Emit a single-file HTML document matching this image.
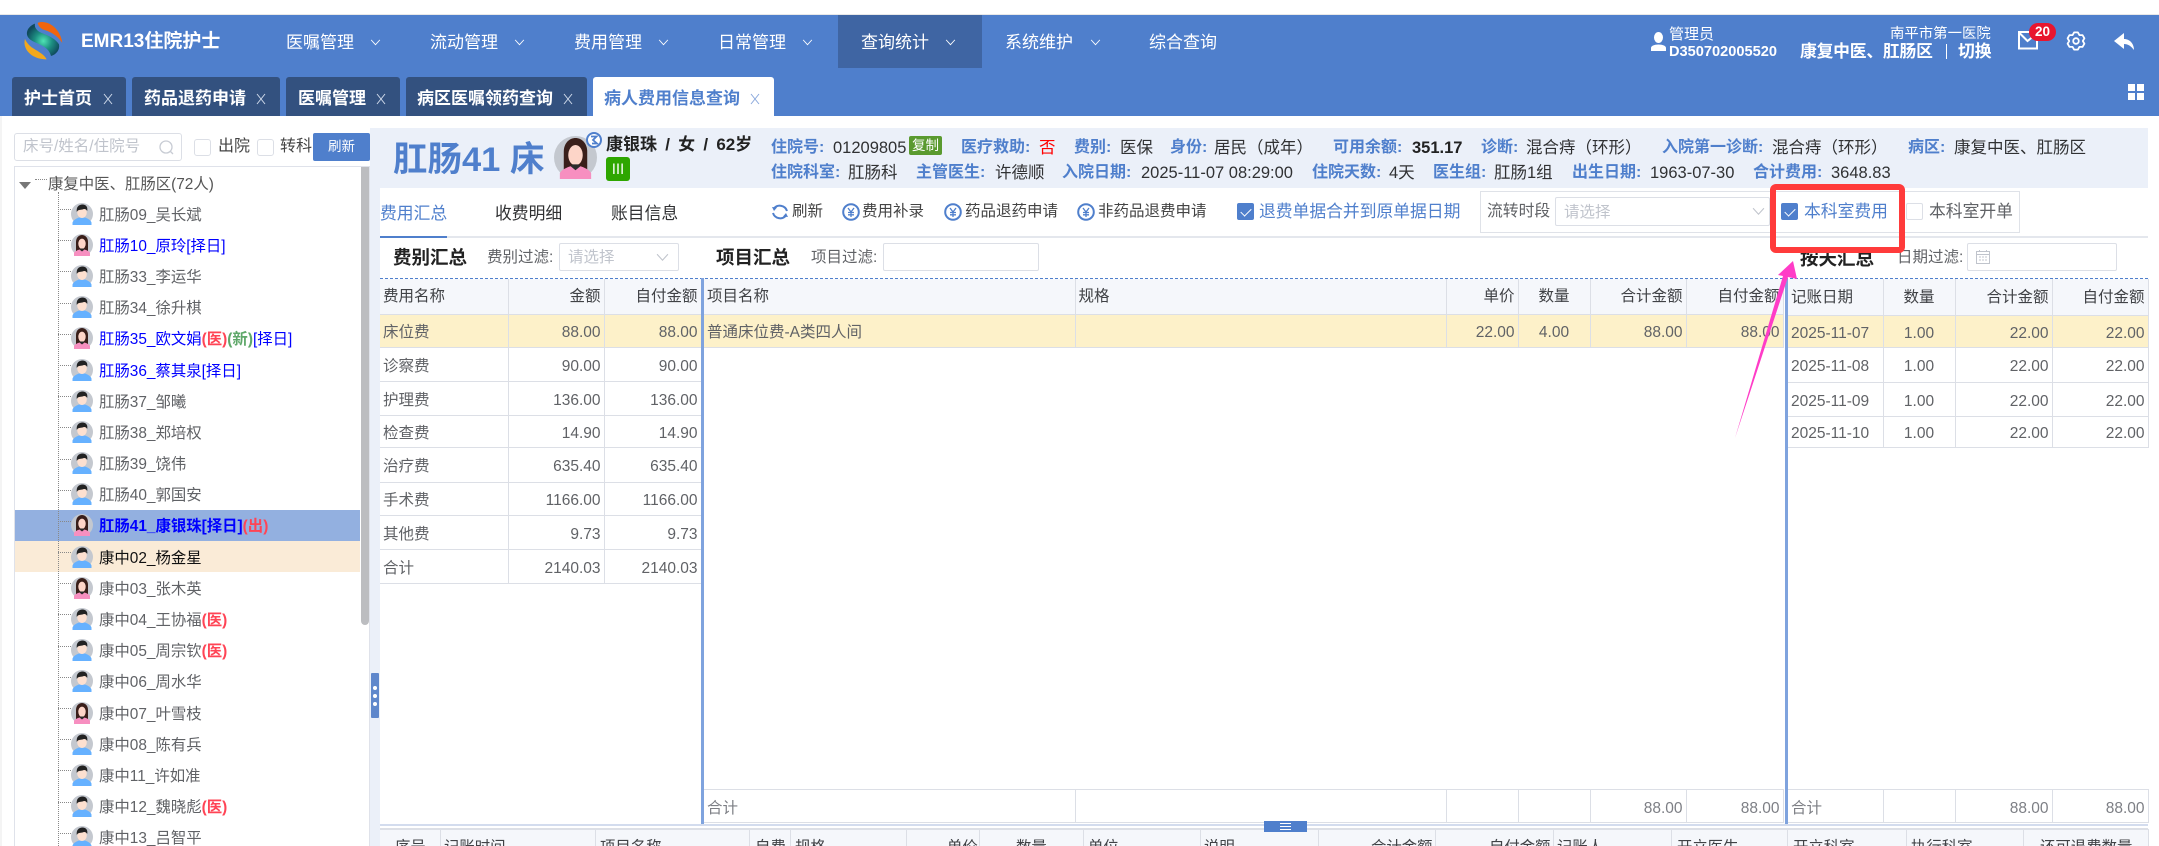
<!DOCTYPE html>
<html lang="zh"><head><meta charset="utf-8"><title>EMR13住院护士</title>
<style>
html,body{margin:0;padding:0;background:#fff}
#p{position:relative;width:2159px;height:846px;overflow:hidden;background:#fff;font-family:"Liberation Sans","Noto Sans CJK SC",sans-serif;font-size:15.5px;color:#606266}
#p *{box-sizing:border-box}
.a{position:absolute}
.t{position:absolute;white-space:nowrap;line-height:20px;height:20px}
.n{color:#fff;font-size:17px;top:33px}
.tab{position:absolute;top:77px;height:39px;background:#33517f;border-radius:3px 3px 0 0}
.tt{position:absolute;top:89px;color:#fff;font-weight:700;font-size:17px;line-height:20px;white-space:nowrap}
.l{color:#4f7fcc;font-weight:700;font-size:16px}
.v{color:#303133;font-size:16.5px}
.r1{top:138px}.r2{top:162.500px}
.cb{position:absolute;width:17px;height:17px;border:1px solid #dcdfe6;border-radius:2px;background:#fff}
.cb.on{background:#4f7fcc;border-color:#4f7fcc}
.cb.on:after{content:"";position:absolute;left:5px;top:2px;width:5px;height:9px;border:solid #fff;border-width:0 1px 1px 0;transform:rotate(45deg)}
.inp{position:absolute;background:#fff;border:1px solid #dcdfe6;border-radius:2px}
.ph{color:#c0c4cc;font-size:15.5px}
.row{position:relative;height:31.2px;display:flex;align-items:center;padding-left:56px;color:#606266;font-size:15.4px;white-space:nowrap}
.row:before{content:"";position:absolute;left:43px;width:13px;top:11px;border-top:1px dotted #888}
.row svg{width:22px;height:22px;margin-right:6px;flex:none}
.b{color:#00f}.m{color:#ff4455;font-weight:700}.g{color:#5fa86a;font-weight:700}
table{position:absolute;border-collapse:collapse;table-layout:fixed;font-size:15.5px;color:#606266}
td,th{border-right:1px solid #dcdfe6;border-bottom:1px solid #dcdfe6;padding:0 3px;font-weight:400;overflow:hidden;white-space:nowrap;text-align:left;line-height:20px}
td{padding-top:5px}
th{background:#f5f7fb;color:#404246;padding-top:2px}
.R{text-align:right}.C{text-align:center}
tr.hl td{background:#fdf1c9}
.bt{position:absolute;top:838px;line-height:20px;white-space:nowrap;color:#404246;font-size:15.4px}
.vl{position:absolute;top:829px;height:17px;width:1px;background:#dcdfe6}
</style></head><body><div id="p">

<svg width="0" height="0" style="position:absolute"><defs>
<symbol id="ma" viewBox="0 0 22 22"><circle cx="11" cy="11" r="11" fill="#c4c8cf"/><path d="M1.5 22v-2.5c1-3 5-4.5 6.5-5h6c1.5.5 5.500 2 6.500 5V22z" fill="#66b1ff"/><ellipse cx="11" cy="9.500" rx="4.800" ry="5.500" fill="#fde0d0"/><path d="M5.800 9C5 4 8 1.500 11.500 1.500 15 1.500 17 4 16.200 8 15 6 13.500 5.500 11.500 6.500 9 7 7 6.500 5.800 9z" fill="#222"/></symbol>
<symbol id="fe" viewBox="0 0 22 22"><circle cx="11" cy="11" r="11" fill="#c4c8cf"/><path d="M5 20V8c0-4.500 3-7 6-7s6 2.500 6 7v12z" fill="#3a1f1a"/><path d="M3 22v-3c1-2 4-3 5.500-3.500h5c1.500.5 4.500 1.500 5.500 3.500v3z" fill="#f78fc0"/><ellipse cx="11" cy="9.800" rx="3.700" ry="5.200" fill="#fdd5c8"/><path d="M8.500 15.500l2.500 2 2.500-2-1-1h-3z" fill="#2b2b2b"/></symbol>
<symbol id="yen" viewBox="0 0 18 18"><circle cx="9" cy="9" r="7.800" fill="none" stroke="#4f7fcc" stroke-width="2"/><path d="M6 5l3 4 3-4M9 9v5M6 9.500h6M6 11.800h6" fill="none" stroke="#4f7fcc" stroke-width="1.300"/></symbol>
<symbol id="x" viewBox="0 0 10 12"><path d="M1 1l8 10M9 1L1 11" stroke="currentColor" stroke-width="1" fill="none"/></symbol>
<symbol id="ch" viewBox="0 0 12 8"><path d="M1 1l5 5.500L11 1" stroke="currentColor" stroke-width="1" fill="none"/></symbol>
<radialGradient id="lg" gradientUnits="userSpaceOnUse" cx="85" cy="80" r="52"><stop offset="0" stop-color="#4fe3b4"/><stop offset=".5" stop-color="#1d8f82"/><stop offset="1" stop-color="#0f4a5c"/></radialGradient>
</defs></svg>

<!-- header -->
<div class="a" style="left:0;top:14px;width:2159px;height:1px;background:#e8e8e8"></div>
<div class="a" style="left:0;top:15px;width:2159px;height:101px;background:#4f7fcc"></div>
<div class="a" style="left:838px;top:15px;width:144px;height:53px;background:#3f65a3"></div>
<svg class="a" style="left:23px;top:21px" width="41" height="41" viewBox="24 20 123 123">
<path d="M68 26C90 15 135 35 142 86 125 60 100 50 85 46 76 42 70 34 68 26z" fill="#f0650e"/>
<path d="M60 28C35 38 30 60 42 72 55 88 100 90 108 125 125 120 135 105 132 90 115 65 85 60 72 52 62 45 58 36 60 28z" fill="url(#lg)"/>
<path d="M30 74C22 100 45 135 95 135 90 125 80 118 68 110 50 100 38 92 30 74z" fill="#f2a81d"/>
</svg>
<div class="t" style="left:81px;top:32px;color:#fff;font-weight:700;font-size:19px">EMR13住院护士</div>
<div class="t n" style="left:286px">医嘱管理</div>
<div class="t n" style="left:430px">流动管理</div>
<div class="t n" style="left:574px">费用管理</div>
<div class="t n" style="left:718px">日常管理</div>
<div class="t n" style="left:861px">查询统计</div>
<div class="t n" style="left:1005px">系统维护</div>
<div class="t n" style="left:1149px">综合查询</div>
<svg class="a" style="left:370px;top:39px;color:#fff" width="11" height="7"><use href="#ch"/></svg>
<svg class="a" style="left:514px;top:39px;color:#fff" width="11" height="7"><use href="#ch"/></svg>
<svg class="a" style="left:658px;top:39px;color:#fff" width="11" height="7"><use href="#ch"/></svg>
<svg class="a" style="left:802px;top:39px;color:#fff" width="11" height="7"><use href="#ch"/></svg>
<svg class="a" style="left:945px;top:39px;color:#fff" width="11" height="7"><use href="#ch"/></svg>
<svg class="a" style="left:1090px;top:39px;color:#fff" width="11" height="7"><use href="#ch"/></svg>

<svg class="a" style="left:1651px;top:32px" width="15" height="19" viewBox="0 0 15 19"><ellipse cx="7.500" cy="5.500" rx="4.500" ry="5.500" fill="#fff"/><path d="M0 19v-3c0-2 3-3.500 7.500-3.500S15 14 15 16v3z" fill="#fff"/></svg>
<div class="t" style="left:1669px;top:27px;color:#fff;font-size:15px;line-height:16px">管理员</div>
<div class="t" style="left:1669px;top:41.500px;color:#fff;font-size:14.600px;font-weight:700">D350702005520</div>
<div class="t" style="left:1890px;top:24px;color:#fff;font-size:14.400px">南平市第一医院</div>
<div class="t" style="left:1800px;top:42px;color:#fff;font-size:16.800px;font-weight:700;letter-spacing:-.2px">康复中医、肛肠区</div>
<div class="a" style="left:1946px;top:44px;width:1px;height:15px;background:#fff"></div>
<div class="t" style="left:1958px;top:42px;color:#fff;font-size:16.800px;font-weight:700">切换</div>
<svg class="a" style="left:2017px;top:30px" width="22" height="20" viewBox="0 0 22 20"><path d="M14 2H2v16.500h18V8M2.500 3l8 8 5-4" fill="none" stroke="#fff" stroke-width="2"/></svg>
<div class="a" style="left:2029px;top:23px;width:27px;height:18px;border-radius:9px;background:#e8152e;color:#fff;font-size:13.500px;font-weight:700;text-align:center;line-height:18px">20</div>
<svg class="a" style="left:2066px;top:31px" width="20" height="20" viewBox="0 0 20 20"><path d="M8.100 1.400h3.800l1.500 2.700h3.100l1.900 3.200-1.600 2.700 1.600 2.700-1.900 3.200h-3.100l-1.500 2.700H8.100l-1.500-2.700H3.500l-1.900-3.200L3.200 10 1.600 7.300l1.900-3.200h3.100z" fill="none" stroke="#fff" stroke-width="1.800" stroke-linejoin="round"/><circle cx="10" cy="10" r="2.800" fill="none" stroke="#fff" stroke-width="1.800"/></svg>
<svg class="a" style="left:2114px;top:33px" width="20" height="17" viewBox="0 0 20 17"><path d="M0 8L10 0v6c6 0 10 5 10 11-3-4-6-6-10-6v5z" fill="#fff"/></svg>
<svg class="a" style="left:2128px;top:84px" width="16" height="16"><rect width="7" height="7" fill="#fff"/><rect x="9" width="7" height="7" fill="#fff"/><rect y="9" width="7" height="7" fill="#fff"/><rect x="9" y="9" width="7" height="7" fill="#fff"/></svg>

<!-- tabs -->
<div class="tab" style="left:12px;width:114px"></div><div class="tt" style="left:24px">护士首页</div>
<div class="tab" style="left:132px;width:148px"></div><div class="tt" style="left:144px">药品退药申请</div>
<div class="tab" style="left:286px;width:114px"></div><div class="tt" style="left:298px">医嘱管理</div>
<div class="tab" style="left:406px;width:181px"></div><div class="tt" style="left:417px">病区医嘱领药查询</div>
<div class="tab" style="left:593px;width:181px;background:#fff"></div><div class="tt" style="left:604px;color:#4f7fcc">病人费用信息查询</div>
<svg class="a" style="left:103px;top:93px;color:#cfd9ea" width="10" height="12"><use href="#x"/></svg>
<svg class="a" style="left:256px;top:93px;color:#cfd9ea" width="10" height="12"><use href="#x"/></svg>
<svg class="a" style="left:376px;top:93px;color:#cfd9ea" width="10" height="12"><use href="#x"/></svg>
<svg class="a" style="left:563px;top:93px;color:#cfd9ea" width="10" height="12"><use href="#x"/></svg>
<svg class="a" style="left:750px;top:93px;color:#8aa8dc" width="10" height="12"><use href="#x"/></svg>

<!-- left panel -->
<div class="a" style="left:0;top:116px;width:2px;height:730px;background:#f4f4f4"></div>
<div class="inp" style="left:14px;top:133px;width:168px;height:28px;border-radius:3px"></div>
<div class="t ph" style="left:23px;top:137px">床号/姓名/住院号</div>
<svg class="a" style="left:159px;top:140px" width="15" height="15"><circle cx="7" cy="7" r="6" fill="none" stroke="#c8ccd4" stroke-width="1.300"/><path d="M11 11l3 3" stroke="#c8ccd4" stroke-width="1.300"/></svg>
<div class="cb" style="left:194px;top:139px;border-radius:3px"></div>
<div class="t" style="left:218px;top:137px;font-size:16px;color:#444">出院</div>
<div class="cb" style="left:257px;top:139px;border-radius:3px"></div>
<div class="t" style="left:280px;top:137px;font-size:16px;color:#444">转科</div>
<div class="a" style="left:313px;top:133px;width:57px;height:28px;background:#4f7fcc;border-radius:2px;color:#fff;font-size:13.500px;line-height:28px;text-align:center">刷新</div>

<div class="a" style="left:14px;top:166px;width:356px;height:680px;border:1px solid #dfe2ea;border-bottom:0;overflow:hidden">
  <div class="a" style="left:0;top:31px;width:345px">
    <div class="row"><svg><use href="#ma"/></svg>肛肠09_吴长斌</div>
    <div class="row b" style="color:#00f"><svg><use href="#fe"/></svg>肛肠10_原玲[择日]</div>
    <div class="row"><svg><use href="#ma"/></svg>肛肠33_李运华</div>
    <div class="row"><svg><use href="#ma"/></svg>肛肠34_徐升棋</div>
    <div class="row" style="color:#00f"><svg><use href="#fe"/></svg>肛肠35_欧文娟<span class="m">(医)</span><span class="g">(新)</span>[择日]</div>
    <div class="row" style="color:#00f"><svg><use href="#ma"/></svg>肛肠36_蔡其泉[择日]</div>
    <div class="row"><svg><use href="#ma"/></svg>肛肠37_邹曦</div>
    <div class="row"><svg><use href="#ma"/></svg>肛肠38_郑培权</div>
    <div class="row"><svg><use href="#ma"/></svg>肛肠39_饶伟</div>
    <div class="row"><svg><use href="#ma"/></svg>肛肠40_郭国安</div>
    <div class="row" style="background:#93b0e0;color:#00f;font-weight:700"><svg><use href="#fe"/></svg>肛肠41_康银珠[择日]<span class="m">(出)</span></div>
    <div class="row" style="background:#faebd7;color:#111"><svg><use href="#ma"/></svg>康中02_杨金星</div>
    <div class="row"><svg><use href="#fe"/></svg>康中03_张木英</div>
    <div class="row"><svg><use href="#ma"/></svg>康中04_王协福<span class="m">(医)</span></div>
    <div class="row"><svg><use href="#ma"/></svg>康中05_周宗钦<span class="m">(医)</span></div>
    <div class="row"><svg><use href="#ma"/></svg>康中06_周水华</div>
    <div class="row"><svg><use href="#fe"/></svg>康中07_叶雪枝</div>
    <div class="row"><svg><use href="#ma"/></svg>康中08_陈有兵</div>
    <div class="row"><svg><use href="#ma"/></svg>康中11_许如准</div>
    <div class="row"><svg><use href="#ma"/></svg>康中12_魏晓彪<span class="m">(医)</span></div>
    <div class="row"><svg><use href="#ma"/></svg>康中13_吕智平</div>
  </div>
  <div class="a" style="left:43px;top:25px;height:660px;border-left:1px dotted #888"></div>
  <div class="a" style="left:20px;top:12px;width:12px;border-top:1px dotted #888"></div>
  <div class="a" style="left:4px;top:15px;width:0;height:0;border-left:6px solid transparent;border-right:6px solid transparent;border-top:7px solid #777"></div>
  <div class="t" style="left:33px;top:8px;font-size:15.400px;color:#555">康复中医、肛肠区(72人)</div>
  <div class="a" style="left:346px;top:0;width:8px;height:458px;background:#bcbdc0;border-radius:0 0 4px 4px"></div>
</div>
<div class="a" style="left:370px;top:128px;width:10px;height:718px;background:#ebf0f9"></div>
<div class="a" style="left:371px;top:673px;width:8px;height:45px;background:#5e87cc;border-radius:1px"></div>
<div class="a" style="left:373px;top:686px;width:4px;height:4px;border-radius:2px;background:#fff"></div>
<div class="a" style="left:373px;top:694px;width:4px;height:4px;border-radius:2px;background:#fff"></div>
<div class="a" style="left:373px;top:702px;width:4px;height:4px;border-radius:2px;background:#fff"></div>

<!-- patient info -->
<div class="a" style="left:379px;top:128px;width:1769px;height:60px;background:#ebf0f9"></div>
<div class="t" style="left:393px;top:142px;height:36px;line-height:36px;font-size:34.500px;font-weight:700;color:#4f7fcc">肛肠41 床</div>
<svg class="a" style="left:554px;top:136px" width="43" height="43"><use href="#fe"/></svg>
<svg class="a" style="left:586px;top:132px" width="16" height="16" viewBox="0 0 16 16"><circle cx="8" cy="8" r="7" fill="#fff" stroke="#4f7fcc" stroke-width="2"/><path d="M5 4.500h5.500L7 8l4 3.500H6" fill="none" stroke="#4f7fcc" stroke-width="1.800"/></svg>
<div class="t" style="left:606px;top:135px;font-size:17px;font-weight:700;color:#222;word-spacing:3.500px">康银珠 / 女 / 62岁</div>
<div class="a" style="left:606px;top:157px;width:24px;height:24px;background:#2ea600;border-radius:3px;color:#fff;font-size:14px;text-align:center;line-height:24px">Ⅲ</div>

<div class="t l r1" style="left:771px">住院号:</div><div class="t v r1" style="left:833px">01209805</div>
<div class="a" style="left:909px;top:136px;width:33px;height:19px;background:#5a9a2f;border-radius:2px;color:#fff;font-size:13.500px;line-height:19px;text-align:center">复制</div>
<div class="t l r1" style="left:961px">医疗救助:</div><div class="t v r1" style="left:1039px;color:#f00">否</div>
<div class="t l r1" style="left:1074px">费别:</div><div class="t v r1" style="left:1120px">医保</div>
<div class="t l r1" style="left:1170px">身份:</div><div class="t v r1" style="left:1214px">居民（成年）</div>
<div class="t l r1" style="left:1333px">可用余额:</div><div class="t v r1" style="left:1412px;font-weight:700;color:#222">351.17</div>
<div class="t l r1" style="left:1481px">诊断:</div><div class="t v r1" style="left:1526px">混合痔（环形）</div>
<div class="t l r1" style="left:1662px">入院第一诊断:</div><div class="t v r1" style="left:1772px">混合痔（环形）</div>
<div class="t l r1" style="left:1908px">病区:</div><div class="t v r1" style="left:1954px">康复中医、肛肠区</div>

<div class="t l r2" style="left:771px">住院科室:</div><div class="t v r2" style="left:848px">肛肠科</div>
<div class="t l r2" style="left:916px">主管医生:</div><div class="t v r2" style="left:995px">许德顺</div>
<div class="t l r2" style="left:1062px">入院日期:</div><div class="t v r2" style="left:1141px">2025-11-07 08:29:00</div>
<div class="t l r2" style="left:1312px">住院天数:</div><div class="t v r2" style="left:1389px">4天</div>
<div class="t l r2" style="left:1433px">医生组:</div><div class="t v r2" style="left:1494px">肛肠1组</div>
<div class="t l r2" style="left:1572px">出生日期:</div><div class="t v r2" style="left:1650px">1963-07-30</div>
<div class="t l r2" style="left:1753px">合计费用:</div><div class="t v r2" style="left:1831px">3648.83</div>

<!-- tabs row -->
<div class="a" style="left:380px;top:236px;width:1768px;height:2px;background:#e4e7ed"></div>
<div class="a" style="left:380px;top:236px;width:67px;height:2px;background:#4f7fcc"></div>
<div class="t" style="left:380px;top:204px;font-size:16.800px;color:#4f7fcc">费用汇总</div>
<div class="t" style="left:495px;top:204px;font-size:16.800px;color:#303133">收费明细</div>
<div class="t" style="left:611px;top:204px;font-size:16.800px;color:#303133">账目信息</div>

<svg class="a" style="left:771px;top:203px" width="18" height="18" viewBox="0 0 18 18"><path d="M3 5.500A7.500 7.500 0 0 1 16 8M15 12.500A7.500 7.500 0 0 1 2 10" fill="none" stroke="#4f7fcc" stroke-width="2"/><path d="M1 4l5 .5L3 8zM17 14l-5-.5L15 10z" fill="#4f7fcc"/></svg>
<div class="t" style="left:792px;top:202px;color:#444;font-size:15.500px">刷新</div>
<svg class="a" style="left:842px;top:203px" width="18" height="18"><use href="#yen"/></svg>
<div class="t" style="left:862px;top:202px;color:#444;font-size:15.500px">费用补录</div>
<svg class="a" style="left:944px;top:203px" width="18" height="18"><use href="#yen"/></svg>
<div class="t" style="left:965px;top:202px;color:#444;font-size:15.500px">药品退药申请</div>
<svg class="a" style="left:1077px;top:203px" width="18" height="18"><use href="#yen"/></svg>
<div class="t" style="left:1098px;top:202px;color:#444;font-size:15.500px">非药品退费申请</div>
<div class="cb on" style="left:1237px;top:203px"></div>
<div class="t" style="left:1259px;top:202px;color:#4f7fcc;font-size:16.800px">退费单据合并到原单据日期</div>

<div class="a" style="left:1480px;top:191px;width:540px;height:42px;border:1px solid #dfe2e8"></div>
<div class="t" style="left:1487px;top:202px;color:#606266;font-size:15.800px">流转时段</div>
<div class="inp" style="left:1555px;top:197px;width:215px;height:29px"></div>
<div class="t ph" style="left:1564px;top:203px">请选择</div>
<svg class="a" style="left:1752px;top:207px;color:#c0c4cc" width="13" height="9"><use href="#ch"/></svg>
<div class="cb on" style="left:1781px;top:203px"></div>
<div class="t" style="left:1804px;top:202px;color:#4f7fcc;font-size:16.800px">本科室费用</div>
<div class="cb" style="left:1906px;top:203px"></div>
<div class="t" style="left:1929px;top:202px;color:#606266;font-size:16.800px">本科室开单</div>

<!-- section row -->
<div class="t" style="left:393px;top:248px;font-size:18.500px;font-weight:700;color:#222">费别汇总</div>
<div class="t" style="left:487px;top:248px;font-size:15.500px;color:#606266;line-height:20px">费别过滤:</div>
<div class="inp" style="left:559px;top:243px;width:120px;height:28px"></div>
<div class="t ph" style="left:568px;top:248px">请选择</div>
<svg class="a" style="left:656px;top:253px;color:#c0c4cc" width="13" height="9"><use href="#ch"/></svg>
<div class="t" style="left:716px;top:248px;font-size:18.500px;font-weight:700;color:#222">项目汇总</div>
<div class="t" style="left:811px;top:248px;font-size:15.500px;color:#606266">项目过滤:</div>
<div class="inp" style="left:883px;top:243px;width:156px;height:28px"></div>
<div class="t" style="left:1800px;top:249px;font-size:18.500px;font-weight:700;color:#222">按天汇总</div>
<div class="t" style="left:1897px;top:248px;font-size:15.500px;color:#606266">日期过滤:</div>
<div class="inp" style="left:1967px;top:243px;width:150px;height:28px"></div>
<svg class="a" style="left:1976px;top:250px" width="14" height="14" viewBox="0 0 14 14"><rect x=".5" y="1.500" width="13" height="12" fill="none" stroke="#c0c4cc"/><path d="M.5 4.500h13M3 7h2M6 7h2M9 7h2M3 10h2M6 10h2M9 10h2M3.500 0v2M10.500 0v2" stroke="#c0c4cc" fill="none"/></svg>
<div class="a" style="left:380px;top:278px;width:1768px;border-top:1px dashed #4f7fcc"></div>

<!-- left table -->
<table style="left:380px;top:279px;width:321px"><colgroup><col style="width:128px"><col style="width:96px"><col style="width:97px"></colgroup>
<tr style="height:35px"><th>费用名称</th><th class="R">金额</th><th class="R">自付金额</th></tr>
<tr class="hl" style="height:33px"><td>床位费</td><td class="R">88.00</td><td class="R">88.00</td></tr>
<tr style="height:34px"><td>诊察费</td><td class="R">90.00</td><td class="R">90.00</td></tr>
<tr style="height:34px"><td>护理费</td><td class="R">136.00</td><td class="R">136.00</td></tr>
<tr style="height:32px"><td>检查费</td><td class="R">14.90</td><td class="R">14.90</td></tr>
<tr style="height:35px"><td>治疗费</td><td class="R">635.40</td><td class="R">635.40</td></tr>
<tr style="height:33px"><td>手术费</td><td class="R">1166.00</td><td class="R">1166.00</td></tr>
<tr style="height:34px"><td>其他费</td><td class="R">9.73</td><td class="R">9.73</td></tr>
<tr style="height:34px"><td>合计</td><td class="R">2140.03</td><td class="R">2140.03</td></tr>
</table>
<div class="a" style="left:701px;top:278px;width:3px;height:546px;background:#7fa3de"></div>

<!-- middle table -->
<table style="left:704px;top:279px;width:1079px"><colgroup><col style="width:371px"><col style="width:371px"><col style="width:72px"><col style="width:72px"><col style="width:96px"><col style="width:97px"></colgroup>
<tr style="height:35px"><th>项目名称</th><th>规格</th><th class="R">单价</th><th class="C">数量</th><th class="R">合计金额</th><th class="R">自付金额</th></tr>
<tr class="hl" style="height:33px"><td>普通床位费-A类四人间</td><td></td><td class="R">22.00</td><td class="C">4.00</td><td class="R">88.00</td><td class="R">88.00</td></tr>
</table>
<table style="left:704px;top:789px;width:1079px;border-top:1px solid #dcdfe6;color:#7d7f85"><colgroup><col style="width:371px"><col style="width:371px"><col style="width:72px"><col style="width:72px"><col style="width:96px"><col style="width:97px"></colgroup>
<tr style="height:33px"><td>合计</td><td></td><td></td><td></td><td class="R">88.00</td><td class="R">88.00</td></tr>
</table>
<div class="a" style="left:1785px;top:278px;width:3px;height:546px;background:#7fa3de"></div>

<!-- right table -->
<table style="left:1788px;top:279px;width:360px"><colgroup><col style="width:95px"><col style="width:72px"><col style="width:97px"><col style="width:96px"></colgroup>
<tr style="height:36px"><th>记账日期</th><th class="C">数量</th><th class="R">合计金额</th><th class="R">自付金额</th></tr>
<tr class="hl" style="height:32px"><td>2025-11-07</td><td class="C">1.00</td><td class="R">22.00</td><td class="R">22.00</td></tr>
<tr style="height:35px"><td>2025-11-08</td><td class="C">1.00</td><td class="R">22.00</td><td class="R">22.00</td></tr>
<tr style="height:34px"><td>2025-11-09</td><td class="C">1.00</td><td class="R">22.00</td><td class="R">22.00</td></tr>
<tr style="height:31px"><td>2025-11-10</td><td class="C">1.00</td><td class="R">22.00</td><td class="R">22.00</td></tr>
</table>
<table style="left:1788px;top:789px;width:360px;border-top:1px solid #dcdfe6;color:#7d7f85"><colgroup><col style="width:95px"><col style="width:72px"><col style="width:97px"><col style="width:96px"></colgroup>
<tr style="height:33px"><td>合计</td><td></td><td class="R">88.00</td><td class="R">88.00</td></tr>
</table>

<!-- bottom table -->
<div class="a" style="left:380px;top:824px;width:1768px;height:2px;background:#d3dcee"></div>
<div class="a" style="left:380px;top:828px;width:1768px;height:18px;background:#f5f7fb;border-top:2px solid #dcdfe6"></div>
<i class="vl" style="left:440px"></i><i class="vl" style="left:595px"></i><i class="vl" style="left:749px"></i><i class="vl" style="left:790px"></i><i class="vl" style="left:906px"></i><i class="vl" style="left:979px"></i><i class="vl" style="left:1083px"></i><i class="vl" style="left:1200px"></i><i class="vl" style="left:1318px"></i><i class="vl" style="left:1435px"></i><i class="vl" style="left:1553px"></i><i class="vl" style="left:1671px"></i><i class="vl" style="left:1787px"></i><i class="vl" style="left:1906px"></i><i class="vl" style="left:2023px"></i><i class="vl" style="left:2148px"></i>
<div class="bt" style="left:395px">序号</div><div class="bt" style="left:444px">记账时间</div><div class="bt" style="left:600px">项目名称</div><div class="bt" style="left:755px">自费</div><div class="bt" style="left:795px">规格</div><div class="bt" style="left:947px">单价</div><div class="bt" style="left:1016px">数量</div><div class="bt" style="left:1088px">单位</div><div class="bt" style="left:1204px">说明</div><div class="bt" style="left:1371px">合计金额</div><div class="bt" style="left:1489px">自付金额</div><div class="bt" style="left:1557px">记账人</div><div class="bt" style="left:1677px">开立医生</div><div class="bt" style="left:1793px">开立科室</div><div class="bt" style="left:1911px">执行科室</div><div class="bt" style="left:2040px">还可退费数量</div>
<div class="a" style="left:1264px;top:821px;width:43px;height:11px;background:#4f7fcc"></div>
<div class="a" style="left:1280px;top:823px;width:11px;height:7px;border-top:1px solid #fff;border-bottom:1px solid #fff"><div style="margin-top:2px;height:1px;background:#fff"></div></div>

<!-- annotation -->
<div class="a" style="left:1770px;top:184px;width:135px;height:69px;border:6px solid #ff3b3b;border-radius:6px"></div>
<svg class="a" style="left:1730px;top:255px" width="75" height="190" viewBox="1730 255 75 190"><path d="M1735 438L1783 276 1778 275 1793 261 1797 279 1788 277z" fill="#ff3cc7"/></svg>

</div></body></html>
